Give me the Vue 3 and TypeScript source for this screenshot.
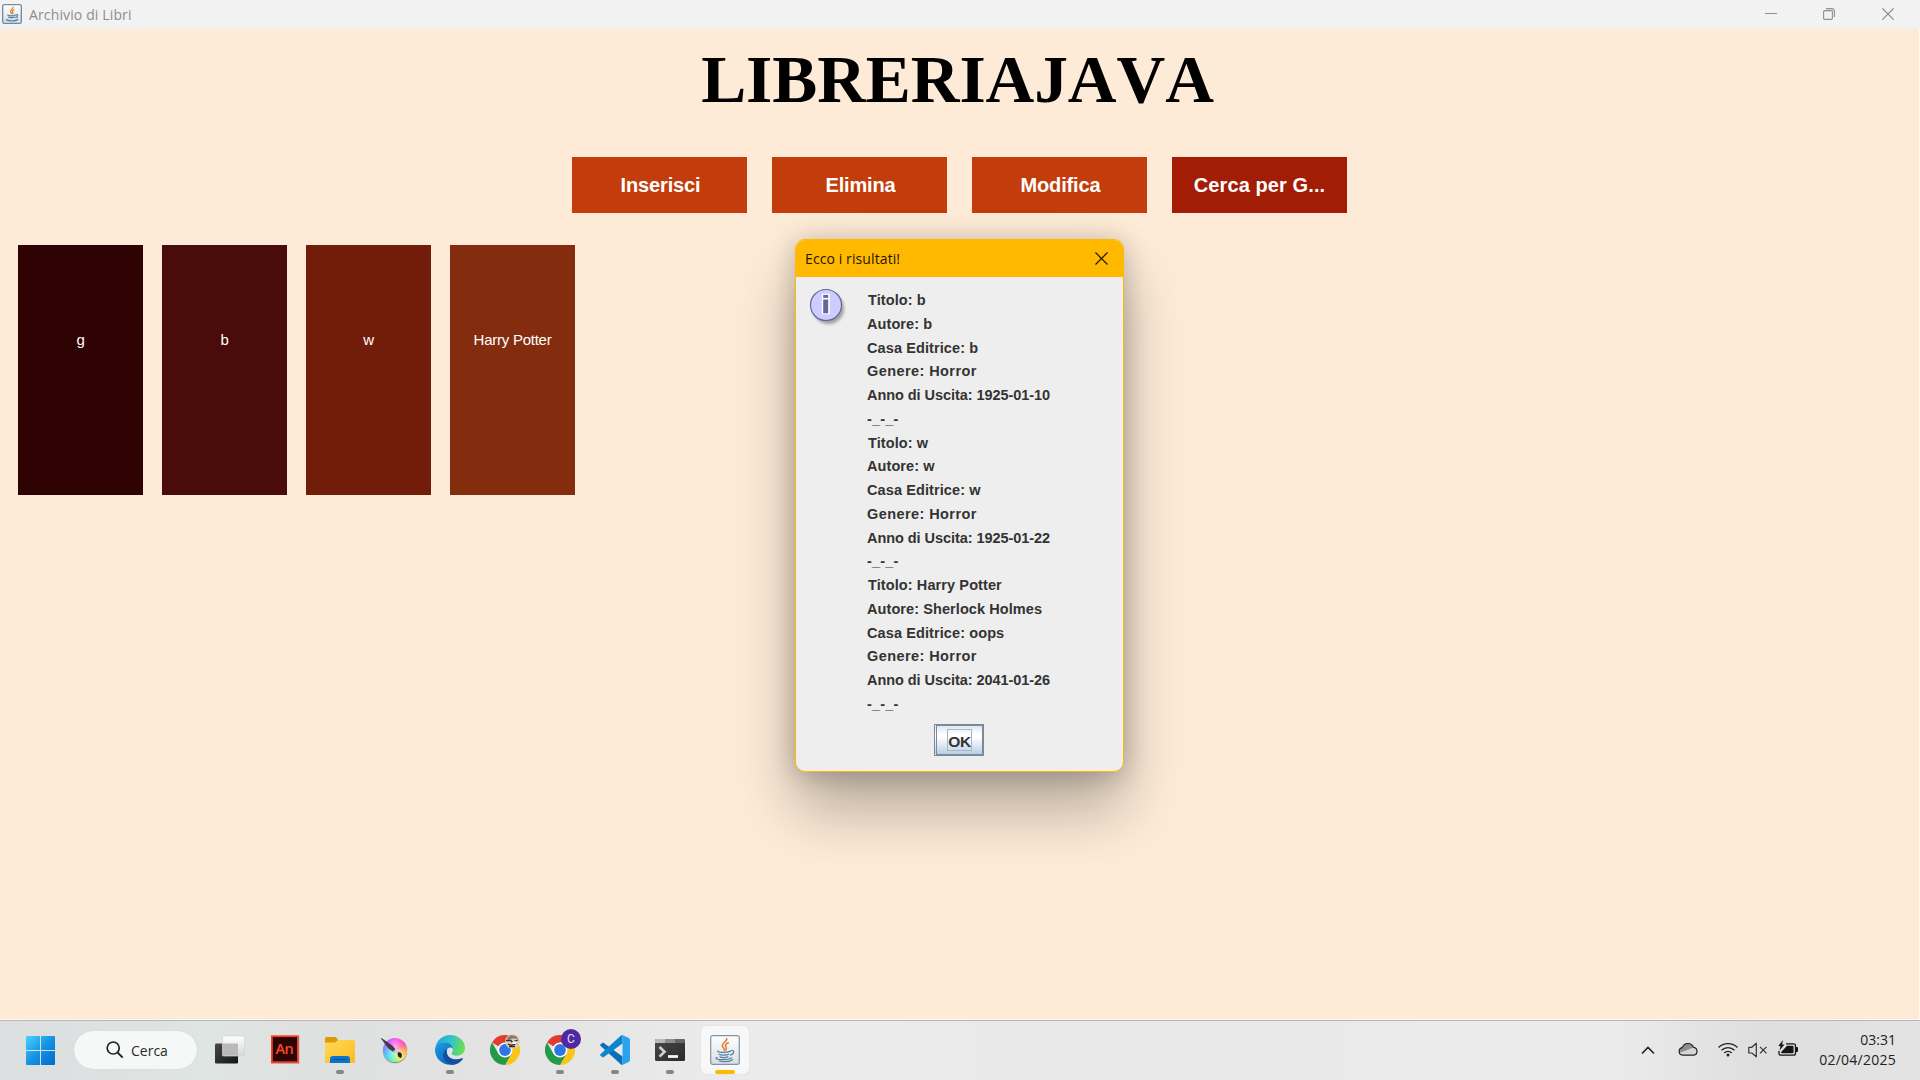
<script setup lang="ts">
interface Book {
  title: string
  color: string
}
interface Result {
  title: string
  author: string
  publisher: string
  genre: string
  date: string
}

const actions: { label: string; active: boolean }[] = [
  { label: 'Inserisci', active: false },
  { label: 'Elimina', active: false },
  { label: 'Modifica', active: false },
  { label: 'Cerca per G...', active: true },
]

const books: Book[] = [
  { title: 'g', color: '#2f0303' },
  { title: 'b', color: '#4a0c0a' },
  { title: 'w', color: '#711d0a' },
  { title: 'Harry Potter', color: '#842d0e' },
]

const results: Result[] = [
  { title: 'b', author: 'b', publisher: 'b', genre: 'Horror', date: '1925-01-10' },
  { title: 'w', author: 'w', publisher: 'w', genre: 'Horror', date: '1925-01-22' },
  { title: 'Harry Potter', author: 'Sherlock Holmes', publisher: 'oops', genre: 'Horror', date: '2041-01-26' },
]
</script>

<template>
  <div class="screen">
    <header class="titlebar">
      <svg class="app-icon" width="20" height="20" viewBox="0 0 30 30">
        <rect x="1" y="1" width="28" height="28" rx="2.5" fill="url(#javaBg)" stroke="#6f8ba3" stroke-width="2" />
        <path d="M16.500 4c1.600 3-4.800 4.600-3.600 7.500.4 1.200 1.800 2.200 1.800 3.900M18.500 8.500c-3 1.200-3.600 2.800-2.400 4.300.6.9.3 1.700-.4 2.500" fill="none" stroke="#e8852f" stroke-width="2" />
        <path d="M8 16.500c3 1.400 9 1.400 12.500 0M9 19.500c3 1.300 7.500 1.300 10.500 0M20.500 16c4-1 4 3.500-.5 4.500M6 23.500c5 2.600 14 2.200 18-.5" fill="none" stroke="#5580a4" stroke-width="2" />
      </svg>
      <span class="window-title">Archivio di Libri</span>
      <div class="window-controls">
        <svg width="12" height="12" viewBox="0 0 12 12"><path d="M0 5.500h12" stroke="#8e8e8e" /></svg>
        <svg width="12" height="12" viewBox="0 0 12 12" fill="none" stroke="#8e8e8e" stroke-width="1.100">
          <rect x=".6" y="2.600" width="8.800" height="8.800" rx="1.200" />
          <path d="M3 .6h5.400a3 3 0 0 1 3 3v5.400" />
        </svg>
        <svg width="12" height="12" viewBox="0 0 12 12"><path d="M.3.3l11.400 11.400M11.700.3L.3 11.700" stroke="#8a8a8a" stroke-width="1.200" /></svg>
      </div>
    </header>

    <main class="content">
      <h1>LIBRERIAJAVA</h1>
      <nav class="actions">
        <button v-for="a in actions" :key="a.label" :class="{ active: a.active }">{{ a.label }}</button>
      </nav>
      <section class="shelf">
        <div v-for="b in books" :key="b.title" class="book" :style="{ background: b.color }">{{ b.title }}</div>
      </section>
    </main>

    <div class="dialog">
      <div class="dialog-bar">
        <span>Ecco i risultati!</span>
        <svg width="13" height="13" viewBox="0 0 13 13"><path d="M.5.5l12 12M12.500.5l-12 12" stroke="#1d1600" stroke-width="1.200" /></svg>
      </div>
      <div class="dialog-body">
        <svg class="info" width="40" height="42" viewBox="0 0 40 42">
          <defs><filter id="soft" x="-30%" y="-30%" width="160%" height="160%"><feGaussianBlur stdDeviation="1.800" /></filter></defs>
          <circle cx="19.500" cy="20.500" r="15.500" fill="#777" opacity=".65" filter="url(#soft)" />
          <circle cx="17" cy="17" r="15.500" fill="#ccccff" stroke="#666699" stroke-width="1.200" />
          <rect x="12.800" y="5.800" width="8" height="20.500" fill="#fff" />
          <rect x="14.200" y="6.900" width="5" height="3" fill="#666699" />
          <rect x="14.200" y="11.500" width="5" height="13.800" fill="#666699" />
        </svg>
        <div class="results">
          <template v-for="r in results" :key="r.date">
            <p class="first">Titolo: {{ r.title }}</p>
            <p class="author">Autore: {{ r.author }}</p>
            <p class="publisher">Casa Editrice: {{ r.publisher }}</p>
            <p class="genre">Genere: {{ r.genre }}</p>
            <p class="date">Anno di Uscita: {{ r.date }}</p>
            <p class="rule">-_-_-</p>
          </template>
        </div>
      </div>
      <button class="ok"><span>OK</span></button>
    </div>

    <footer class="taskbar">
      <div class="start">
        <svg width="29" height="29" viewBox="0 0 29 29">
          <defs><linearGradient id="win" x1="0" y1="0" x2="29" y2="29" gradientUnits="userSpaceOnUse"><stop stop-color="#4cd0ff" /><stop offset=".5" stop-color="#1593e4" /><stop offset="1" stop-color="#0069cc" /></linearGradient></defs>
          <path d="M1 0h13v14H0V1q0-1 1-1M15 0h13q1 0 1 1v13H15zM0 15h14v14H1q-1 0-1-1zM15 15h14v13q0 1-1 1H15z" fill="url(#win)" />
        </svg>
      </div>
      <div class="search">
        <svg width="18" height="18" viewBox="0 0 18 18" fill="none" stroke="#222" stroke-width="1.700"><circle cx="7.200" cy="7" r="6" /><path d="M11.500 11.400l5.200 5.200" stroke-width="2" /></svg>
        <span>Cerca</span>
      </div>

      <div class="apps">
        <div class="slot">
          <svg width="30" height="30" viewBox="0 0 30 30">
            <defs>
              <linearGradient id="tvD" x2="1" y2="1"><stop stop-color="#484848" /><stop offset="1" stop-color="#151515" /></linearGradient>
              <linearGradient id="tvL" x2="0" y2="1"><stop stop-color="#fff" /><stop offset="1" stop-color="#d6d6d6" /></linearGradient>
            </defs>
            <rect x="0" y="8.500" width="23" height="20" rx="1.200" fill="url(#tvD)" />
            <rect x="7.500" y="1" width="22" height="20" rx="1" fill="url(#tvL)" stroke="#d2d2d2" stroke-width=".7" />
            <path d="M8 8.500h15v12H8z" fill="#b9b9b9" />
          </svg>
        </div>
        <div class="slot">
          <svg width="30" height="30" viewBox="0 0 30 30">
            <rect x="1" y="1" width="28.500" height="28" fill="#9b9b9b" opacity=".6" />
            <rect x="1.900" y="1.200" width="26" height="26" fill="#2a0503" stroke="#fa3c22" stroke-width="1.800" />
          </svg>
          <span class="an">An</span>
        </div>
        <div class="slot">
          <svg width="30" height="30" viewBox="0 0 30 30">
            <defs><linearGradient id="fold" x2="1" y2="1"><stop stop-color="#ffd95a" /><stop offset="1" stop-color="#fbbc20" /></linearGradient></defs>
            <path d="M0 3.500q0-1.500 1.500-1.500H10q1 0 2 1.500l1 1.200v5H0z" fill="#de9a06" />
            <path d="M0 7.500h10l3-2.500h15.500q1.500 0 1.500 1.500V27q0 1-1 1H1q-1 0-1-1z" fill="url(#fold)" />
            <path d="M5 28v-4q0-3 3-3h14q3 0 3 3v4z" fill="#0d74c9" />
            <path d="M9 24.500h12" stroke="#0a4f91" stroke-width="1.200" stroke-linecap="round" />
          </svg>
          <i class="mark"></i>
        </div>
        <div class="slot">
          <div class="krita"></div>
          <svg class="over" width="30" height="30" viewBox="0 0 30 30">
            <path d="M.8 2.200Q1 1.600 2.200 2.500L12 9.200l4.500 5-2.300 2.300-5.700-4z" fill="#3d3d42" />
            <path d="M13 15.500l3-3 4 3.800-2 1.700z" fill="#cbcbd2" />
            <path d="M17.600 17.600c.7-2.600 4.300-1.500 4.300 1.500q0 2.400-.9 3c-2.400-.6-3.600-2-3.400-4.500" fill="#26202c" />
          </svg>
        </div>
        <div class="slot">
          <svg width="30" height="30" viewBox="0 0 30 30">
            <defs>
              <linearGradient id="eg" x1="0" y1=".3" x2="1" y2=".5"><stop stop-color="#1fa5df" /><stop offset=".5" stop-color="#35c3c8" /><stop offset="1" stop-color="#6be04c" /></linearGradient>
              <linearGradient id="eb" x2=".6" y2="1"><stop stop-color="#1b9de2" /><stop offset="1" stop-color="#0b69c4" /></linearGradient>
            </defs>
            <path d="M.3 13C1.500 5.500 7.500 0 15 0c9 0 15 6.500 15 12.700 0 5-3.700 8-8 8-4 0-5.800-1.500-5.300-2.700.7-1.300 1.300-2 1.300-3.500C18 10 13 7.500 9 7.500 5 7.500 2 10 .3 13" fill="url(#eg)" />
            <path d="M.3 13C2 9.500 5.500 7.300 9.500 7.300c4.800 0 8.500 3 8.500 7-1-2-3-2.300-5-1-3.500 2.500-3 8 .5 12 1.500 1.900 3.500 3.500 5.500 4.200C9 31.500 0 24.500 0 15z" fill="url(#eb)" />
            <path d="M12.300 13.700c-6.300 3-5.300 11.300.7 14.800 5.500 3 11.500.3 14.800-4.500.4-.7-.3-1.200-1-.8C20 26.300 9.500 23 12.300 13.700" fill="#124f9f" />
          </svg>
          <i class="mark"></i>
        </div>
        <div v-for="n in 2" :key="n" class="slot">
          <svg width="30" height="30" viewBox="0 0 30 30">
            <path d="M15 15L2 7.500A15 15 0 0 1 28 7.500H15z" fill="#e33b2e" />
            <path d="M15 7.500h13A15 15 0 0 1 15 30l6.500-11.200z" fill="#fcc419" />
            <path d="M2 7.500A15 15 0 0 0 15 30l6.500-11.200-13 0z" fill="#249a48" />
            <circle cx="15" cy="15" r="7.500" fill="#fff" />
            <circle cx="15" cy="15" r="5.900" fill="#2f75e8" />
          </svg>
          <svg v-if="n === 1" class="avatar" width="15" height="15" viewBox="0 0 15 15">
            <circle cx="7.500" cy="7.500" r="7.300" fill="#d6cfc0" />
            <path d="M2 3.500l4-2.500 5 1 2 3-5-.5-5 1.500z" fill="#8b7a60" />
            <path d="M1 6.500h5l1 1.500 6-2M3 10c3 2 6 1 8.500-1M4 12.500h6" stroke="#342c24" stroke-width="1.300" fill="none" />
            <path d="M8 7l4 1-1 2H7z" fill="#fff" />
          </svg>
          <template v-else>
            <span class="profile">C</span>
            <i class="mark"></i>
          </template>
        </div>
        <div class="slot">
          <svg width="30" height="30" viewBox="0 0 30 30">
            <path d="M.4 10.800q-.7-.7 0-1.300l1.800-1.600q.8-.6 1.600 0L22.500 21.500V30q-.8 0-1.500-.6z" fill="#0b70b8" />
            <path d="M.4 19.200q-.7.700 0 1.300l1.800 1.600q.8.600 1.600 0L22.500 8.500V0q-.8 0-1.500.6z" fill="#0a86d0" />
            <path d="M22.200 0l6.600 3.100Q30 3.600 30 5v20q0 1.400-1.200 1.900L22.200 30q-.7.200-1.300-.4 1.600.3 1.600-1.600V2q0-1.900-1.600-1.600.6-.6 1.300-.4" fill="#29a3ee" />
          </svg>
          <i class="mark"></i>
        </div>
        <div class="slot">
          <svg width="30" height="30" viewBox="0 0 30 30">
            <defs><linearGradient id="term" x2="1" y2="1"><stop stop-color="#484848" /><stop offset="1" stop-color="#2a2a2a" /></linearGradient></defs>
            <rect y="4" width="30" height="22" rx="1.500" fill="url(#term)" />
            <path d="M0 8V5.500Q0 4 1.500 4H10v4z" fill="#b9b9b9" /><path d="M10 4h10v4H10z" fill="#8c8c8c" /><path d="M20 4h8.500Q30 4 30 5.500V8H20z" fill="#666" />
            <path d="M4.500 12l5 4.800-5 4.800" fill="none" stroke="#cfcfcf" stroke-width="2.700" />
            <path d="M13 21.500h10" stroke="#f2f2f2" stroke-width="2.800" />
          </svg>
          <i class="mark"></i>
        </div>
        <div class="slot current">
          <svg width="30" height="30" viewBox="0 0 30 30">
            <defs><linearGradient id="javaBg" x2="0" y2="1"><stop stop-color="#fff" /><stop offset="1" stop-color="#d9dee3" /></linearGradient></defs>
            <rect x=".7" y=".7" width="28.600" height="28.600" rx="2" fill="url(#javaBg)" stroke="#7d95aa" stroke-width="1.200" />
            <path d="M16.500 3c1.800 3.300-5 4.800-4.200 8 .4 1.500 2.200 2.500 2.300 5M18.800 7.500c-3.500 1.300-4.200 3-2.800 4.800.7 1 .4 2-.5 3.200" fill="none" stroke="#e8792b" stroke-width="1.500" />
            <path d="M8.500 15.800c-4 1.600 7 2.300 12.300.3M9.300 18.700c-1.500 1.600 7.500 1.900 9.700.3M10.300 21.300c-1 1.500 6 1.700 8 .3M20.800 15.600c4.500-.9 3.600 3.700-.8 4.600M7.500 22.400c-6 1.700 7.800 4 14.500.3M9 26c5 1 11 .6 14-1.500" fill="none" stroke="#557f9f" stroke-width="1.200" />
          </svg>
          <i class="mark"></i>
        </div>
      </div>

      <div class="tray">
        <svg class="chevron" width="14" height="9" viewBox="0 0 14 9"><path d="M1 7.500l6-6 6 6" fill="none" stroke="#222" stroke-width="1.600" /></svg>
        <svg class="cloud" width="20" height="14" viewBox="0 0 20 14">
          <path d="M4.500 13.200a3.800 3.800 0 0 1-.3-7.500A6 6 0 0 1 15.500 5.300a4 4 0 0 1 .2 7.900z" fill="#d5d5d5" />
          <path d="M1.200 10.800a3.800 3.800 0 0 1 3-5.100A6 6 0 0 1 15.500 5.300L7 9z" fill="#8e8e8e" />
          <path d="M4.500 13.200a3.800 3.800 0 0 1-.3-7.500A6 6 0 0 1 15.500 5.300a4 4 0 0 1 .2 7.900z" fill="none" stroke="#222" stroke-width="1.200" />
        </svg>
        <svg class="wifi" width="20" height="15" viewBox="0 0 20 15" fill="none" stroke="#222" stroke-width="1.300">
          <path d="M.6 5.500a13.300 13.300 0 0 1 18.800 0M3.500 8.300a9.200 9.200 0 0 1 13 0M6.300 11a5.200 5.200 0 0 1 7.400 0" /><circle cx="10" cy="13" r="1.500" fill="#222" stroke="none" />
        </svg>
        <svg class="volume" width="20" height="16" viewBox="0 0 20 16" fill="none" stroke="#333" stroke-width="1.200">
          <path d="M.8 5.300h3L8.300 1.200v13.600L3.800 11h-3z" stroke-linejoin="round" /><path d="M12 4.800l6.500 6.500M18.500 4.800L12 11.300" />
        </svg>
        <svg class="battery" width="21" height="17" viewBox="0 0 21 17">
          <path d="M8 3.800h7.500q2 0 2 2v7.400q0 2-2 2H3q-2 0-2-2V11" fill="none" stroke="#151515" stroke-width="1.300" />
          <path d="M9 5.800h5.500q1 0 1 1v5.400q0 1-1 1H4q-1 0-1-1z" fill="#151515" />
          <path d="M18 7h1q1 0 1 1v3q0 1-1 1h-1zM5 0L.3 6h2.200l-1 4.500L6.500 4.500H4z" fill="#151515" />
        </svg>
        <div class="clock"><span>03:31</span><span class="day">02/04/2025</span></div>
      </div>
    </footer>
  </div>
</template>

<style>
body {
  margin: 0;
  overflow: hidden;
}
</style>

<style scoped>
.screen {
  position: relative;
  width: 1920px;
  height: 1080px;
  display: flex;
  flex-direction: column;
  overflow: hidden;
  background: #fdebd7;
  font-family: "Liberation Sans", Arial, sans-serif;
}
svg { display: block; flex: none; }
button { border: 0; padding: 0; font-family: inherit; }

.titlebar {
  height: 29px;
  flex: none;
  display: flex;
  align-items: center;
  box-sizing: border-box;
  padding: 0 26px 0 2px;
  background: #f2f2f2;
}
.app-icon { margin-top: -2px; }
.window-title {
  margin-left: 7px;
  font: 14px/20px "Open Sans", "Noto Sans", sans-serif;
  letter-spacing: 0.13px;
  color: #8d8d8d;
}
.window-controls {
  margin: -1px 0 0 auto;
  display: flex;
  gap: 47px;
}
.window-controls svg:first-child { margin-right: -1px; }

.content {
  height: 991px;
  flex: none;
  box-sizing: border-box;
  border-right: 1px solid #fff8ef;
  border-bottom: 1px solid #fff8ef;
}
h1 {
  margin: 0;
  height: 128px;
  padding-right: 4px;
  text-align: center;
  font: bold 67.5px/102px "Liberation Serif", "Times New Roman", serif;
  font-kerning: none;
  letter-spacing: -0.1px;
  color: #000;
}
.actions {
  display: flex;
  justify-content: center;
  gap: 25px;
}
.actions button {
  width: 175px;
  height: 56px;
  padding-left: 2px;
  background: #c33c0c;
  color: #fff;
  font-size: 20px;
  font-weight: bold;
  letter-spacing: -0.15px;
}
.actions button.active {
  padding-left: 0;
  background: #a31c05;
  letter-spacing: 0.1px;
}
.shelf {
  display: flex;
  gap: 19px;
  padding: 32px 18px;
}
.book {
  width: 125px;
  height: 250px;
  box-sizing: border-box;
  padding-top: 85px;
  color: #fff;
  font-size: 15px;
  line-height: 20px;
  letter-spacing: -0.25px;
  text-align: center;
}

.dialog {
  position: absolute;
  left: 795px;
  top: 239px;
  width: 329px;
  height: 533px;
  box-sizing: border-box;
  border: 1px solid #ffb900;
  border-radius: 10px;
  background: #eee;
  overflow: hidden;
  box-shadow: 0 38px 60px rgba(0, 0, 0, 0.28), 0 2px 26px rgba(0, 0, 0, 0.22);
}
.dialog-bar {
  height: 37px;
  display: flex;
  align-items: center;
  justify-content: space-between;
  padding: 0 15px 0 9px;
  background: #ffb900;
  font: 14px/20px "Open Sans", "Noto Sans", sans-serif;
  letter-spacing: 0.1px;
  color: #1d1600;
}
.dialog-bar svg { margin-top: -1px; }
.dialog-body {
  display: flex;
  padding: 11px 0 0 13px;
}
.results {
  margin: 1px 0 0 18px;
  color: #333;
  font-size: 14.5px;
  font-weight: bold;
}
.results p {
  margin: 0;
  height: 23.75px;
  line-height: 23.75px;
  white-space: nowrap;
}
.results .first { padding-left: 1px; letter-spacing: 0.1px; }
.results .author { letter-spacing: 0.08px; }
.results .publisher { letter-spacing: 0.1px; }
.results .genre { letter-spacing: 0.42px; }
.results .date { letter-spacing: -0.06px; }
.results .rule { letter-spacing: 0.2px; }
.ok {
  display: flex;
  align-items: center;
  justify-content: center;
  width: 50px;
  height: 32px;
  margin: 7px 0 0 138px;
  border: 2px solid #7a8a99;
  border-left: 3px double #7a8a99;
  background: linear-gradient(#dde8f3, #fff 30%, #fff 40%, #b8cfe5);
}
.ok span {
  width: 23px;
  height: 20px;
  border: 1px solid #a3b8cc;
  color: #333;
  font-size: 15.5px;
  font-weight: bold;
  line-height: 24px;
  letter-spacing: -0.3px;
}

.taskbar {
  height: 60px;
  flex: none;
  box-sizing: border-box;
  border-top: 1px solid #b4b7ba;
  display: flex;
  background: linear-gradient(90deg, #dcdedf 0, #dfe5e3 11%, #dfe0e0 17%, #e3e3e3 26%, #ebebeb 38%, #e9e9e9 60%, #ebebeb 84%, #dedede 92%, #e4e4e4 100%);
}
.start {
  padding: 15px 19px 0 26px;
}
.search {
  width: 123px;
  height: 38px;
  margin-top: 10px;
  box-sizing: border-box;
  padding-left: 32px;
  display: flex;
  align-items: center;
  gap: 7px;
  border-radius: 19px;
  background: #f5f8f7;
  box-shadow: 0 0 1px #b9bdbd;
  color: #2a2a2a;
  font: 14px/20px "Open Sans", "Noto Sans", sans-serif;
}
.search span { padding-top: 1px; }
.apps {
  display: flex;
  margin-left: 9px;
}
.slot {
  position: relative;
  width: 48px;
  height: 48px;
  margin-top: 5px;
  margin-right: 7px;
  display: flex;
  align-items: center;
  justify-content: center;
}
.slot.current {
  border-radius: 5px;
  background: #f8f8f8;
  box-shadow: 0 0 1px #bbb;
}
.mark {
  position: absolute;
  left: 20px;
  bottom: 0;
  width: 8px;
  height: 4px;
  border-radius: 2px;
  background: #868686;
}
.current .mark {
  left: 14px;
  width: 20px;
  background: #ffb900;
}
.an {
  position: absolute;
  left: 14.5px;
  top: 12.5px;
  color: #fa4a2c;
  font: 600 14.5px/20px "Open Sans", sans-serif;
  letter-spacing: -0.5px;
}
.krita {
  width: 24px;
  height: 24px;
  border-radius: 50%;
  background: radial-gradient(circle, rgba(255, 255, 255, 0.65) 0, rgba(255, 255, 255, 0) 70%), conic-gradient(#ff55f5, #ff4b93 60deg, #ff9b4d 90deg, #ffe94f 135deg, #7ff58a 185deg, #30dff5 225deg, #6390ff 275deg, #d552ff 325deg, #ff55f5);
  box-shadow: 0 1px 1px #777;
}
.over {
  position: absolute;
  left: 9px;
  top: 10px;
}
.avatar {
  position: absolute;
  left: 24px;
  top: 8px;
}
.profile {
  position: absolute;
  left: 25px;
  top: 3px;
  width: 20px;
  height: 20px;
  border-radius: 50%;
  background: #4d2aa3;
  color: #e9defa;
  font: 12px/20px Roboto, sans-serif;
  text-align: center;
}

.tray {
  margin-left: auto;
  display: flex;
  align-items: flex-start;
  padding-right: 24px;
}
.chevron { margin: 25px 23px 0 0; }
.cloud { margin: 21px 20px 0 0; }
.wifi { margin: 21px 10px 0 0; }
.volume { margin: 21px 10px 0 0; }
.battery { margin: 19px 0 0; }
.clock {
  width: 97px;
  margin-top: 9px;
  display: flex;
  flex-direction: column;
  align-items: flex-end;
  color: #222;
  font: 14px/20px "Open Sans", "Noto Sans", sans-serif;
}
.clock .day { letter-spacing: 0.25px; }
</style>
